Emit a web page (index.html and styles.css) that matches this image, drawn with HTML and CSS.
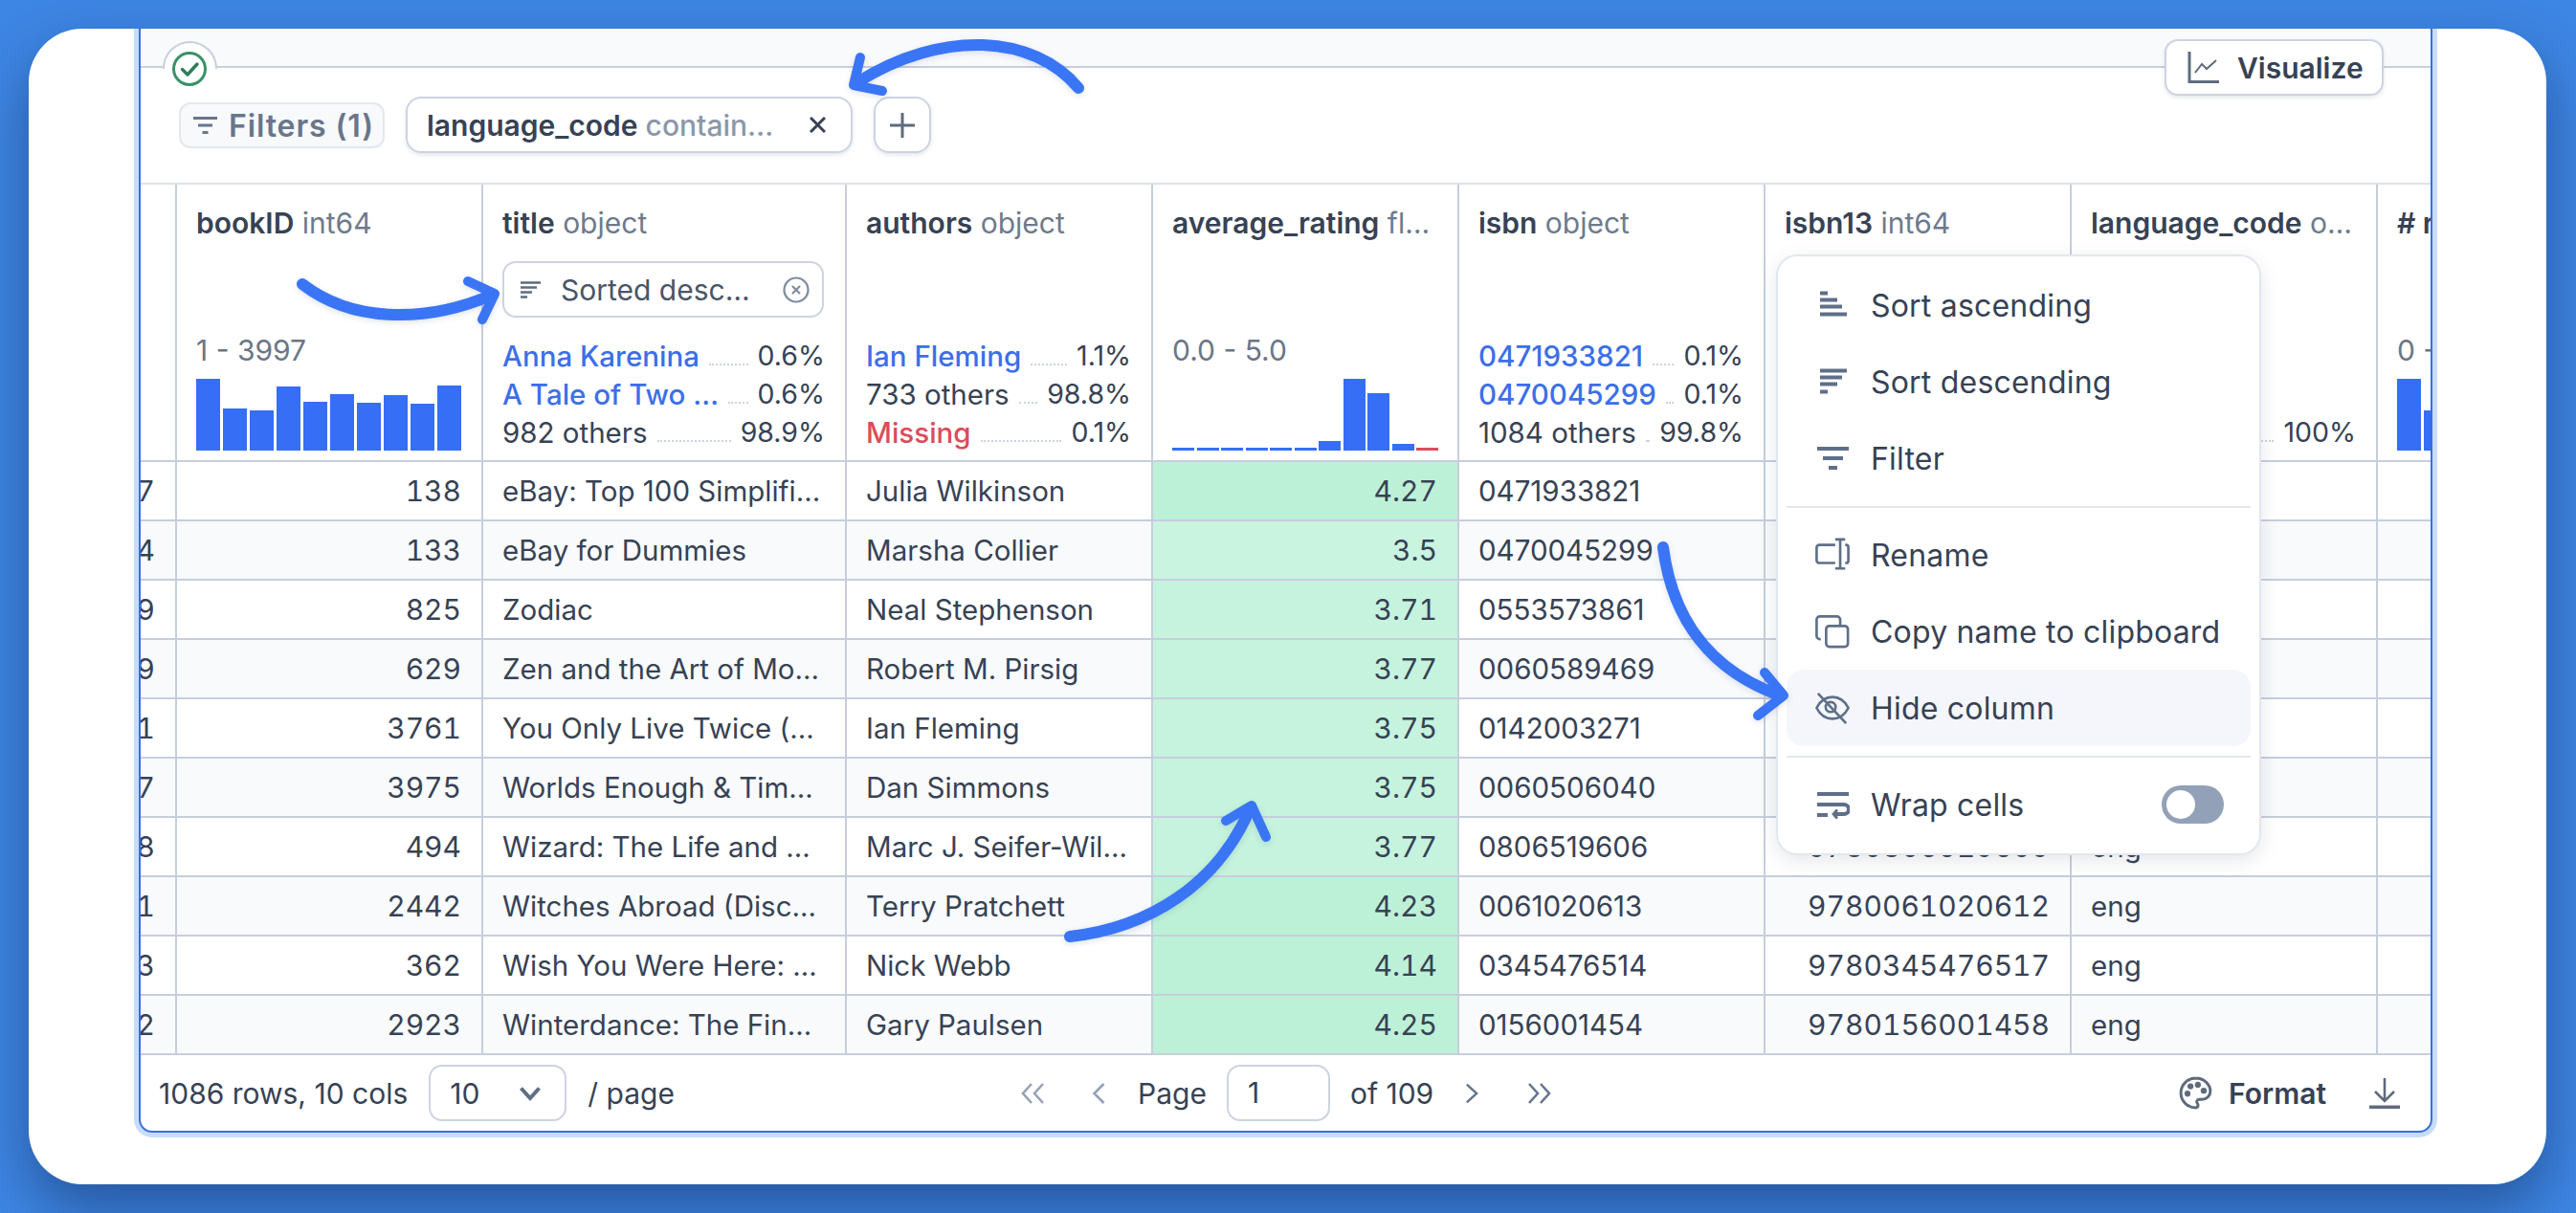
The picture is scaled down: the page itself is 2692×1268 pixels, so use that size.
FILE: index.html
```html
<!DOCTYPE html>
<html lang="en">
<head>
<meta charset="utf-8">
<title>Table</title>
<link rel="stylesheet" href="styles.css">
</head>
<body>
<main class="card">
  <section class="panel">
    <div class="strip"></div>
    <div class="tab"><svg class="tab-icon" viewBox="0 0 36 36"><circle cx="18" cy="18" r="16.5"/><path d="M10.5 18.5l5.5 5.5 10-11"/></svg></div>
    <button class="visualize"><svg class="vis-icon" viewBox="0 0 33 33"><path class="axis" d="M2 0V31.5H33"/><path d="M8 22l7-9 5 5 10-9"/></svg>Visualize</button>

    <div class="filters">
      <div class="filter-btn"><svg class="ico-filter" viewBox="0 0 25 18"><path d="M0 1.5H25M5 9H20M9.5 16.5H15.5"/></svg><span>Filters (1)</span></div>
      <div class="chip"><span class="chip-text"><b>language_code</b> contain…</span><svg class="chip-x" viewBox="0 0 17 17"><path d="M1 1L16 16M16 1L1 16"/></svg></div>
      <div class="plus"><svg viewBox="0 0 26 26"><path d="M13 0V26M0 13H26"/></svg></div>
    </div>

    <div class="scroll">
      <div class="table">
        <div class="row head">
          <div class="th"></div>
          <div class="th">
            <div class="name"><b>bookID</b> int64</div>
            <div class="summary">
              <div class="range">1 - 3997</div>
              <div class="bars"><i class="b75"></i><i class="b44"></i><i class="b42"></i><i class="b67"></i><i class="b51"></i><i class="b59"></i><i class="b50"></i><i class="b58"></i><i class="b49"></i><i class="b68"></i></div>
            </div>
          </div>
          <div class="th">
            <div class="name"><b>title</b> object</div>
            <div class="sorted">
              <svg class="ico-sort-s" viewBox="0 0 21 18"><path d="M0 1.5H21M0 6.5H17M0 11.5H12M0 16.5H7"/></svg>
              <span class="sorted-text">Sorted desc…</span>
              <svg class="ico-clear" viewBox="0 0 28 28"><circle cx="14" cy="14" r="12.5"/><path d="M10 10L18 18M18 10L10 18"/></svg>
            </div>
            <div class="stats">
              <div class="stat"><a>Anna Karenina</a><u></u><span>0.6%</span></div>
              <div class="stat"><a>A Tale of Two …</a><u></u><span>0.6%</span></div>
              <div class="stat"><em>982 others</em><u></u><span>98.9%</span></div>
            </div>
          </div>
          <div class="th">
            <div class="name"><b>authors</b> object</div>
            <div class="stats">
              <div class="stat"><a>Ian Fleming</a><u></u><span>1.1%</span></div>
              <div class="stat"><em>733 others</em><u></u><span>98.8%</span></div>
              <div class="stat"><a class="missing">Missing</a><u></u><span>0.1%</span></div>
            </div>
          </div>
          <div class="th">
            <div class="name"><b>average_rating</b> fl…</div>
            <div class="summary">
              <div class="range">0.0 - 5.0</div>
              <div class="bars tight"><i class="b3"></i><i class="b3"></i><i class="b3"></i><i class="b3"></i><i class="b3"></i><i class="b3"></i><i class="b10"></i><i class="b75"></i><i class="b60"></i><i class="b7"></i><i class="b3 red"></i></div>
            </div>
          </div>
          <div class="th">
            <div class="name"><b>isbn</b> object</div>
            <div class="stats">
              <div class="stat"><a>0471933821</a><u></u><span>0.1%</span></div>
              <div class="stat"><a>0470045299</a><u></u><span>0.1%</span></div>
              <div class="stat"><em>1084 others</em><u></u><span>99.8%</span></div>
            </div>
          </div>
          <div class="th">
            <div class="name"><b>isbn13</b> int64</div>
          </div>
          <div class="th">
            <div class="name"><b>language_code</b> o…</div>
            <div class="stats">
              <div class="stat"><em>eng</em><u></u><span>100%</span></div>
            </div>
          </div>
          <div class="th">
            <div class="name"><b># ratings</b> int64</div>
            <div class="summary">
              <div class="range">0 - 4500</div>
              <div class="bars"><i class="b75"></i><i class="b42"></i><i class="b42"></i></div>
            </div>
          </div>
        </div>

        <div class="row"><div class="num">7</div><div class="num">138</div><div>eBay: Top 100 Simplifi…</div><div>Julia Wilkinson</div><div class="num g1">4.27</div><div>0471933821</div><div class="num">9780471933823</div><div>eng</div><div></div></div>
        <div class="row alt"><div class="num">4</div><div class="num">133</div><div>eBay for Dummies</div><div>Marsha Collier</div><div class="num g3">3.5</div><div>0470045299</div><div class="num">9780470045299</div><div>eng</div><div></div></div>
        <div class="row"><div class="num">9</div><div class="num">825</div><div>Zodiac</div><div>Neal Stephenson</div><div class="num g2">3.71</div><div>0553573861</div><div class="num">9780553573862</div><div>eng</div><div></div></div>
        <div class="row alt"><div class="num">9</div><div class="num">629</div><div>Zen and the Art of Mo…</div><div>Robert M. Pirsig</div><div class="num g2">3.77</div><div>0060589469</div><div class="num">9780060589462</div><div>eng</div><div></div></div>
        <div class="row"><div class="num">1</div><div class="num">3761</div><div>You Only Live Twice (…</div><div>Ian Fleming</div><div class="num g2">3.75</div><div>0142003271</div><div class="num">9780142003275</div><div>eng</div><div></div></div>
        <div class="row alt"><div class="num">7</div><div class="num">3975</div><div>Worlds Enough &amp; Tim…</div><div>Dan Simmons</div><div class="num g2">3.75</div><div>0060506040</div><div class="num">9780060506049</div><div>eng</div><div></div></div>
        <div class="row"><div class="num">8</div><div class="num">494</div><div>Wizard: The Life and …</div><div>Marc J. Seifer-Wil…</div><div class="num g2">3.77</div><div>0806519606</div><div class="num">9780806519609</div><div>eng</div><div></div></div>
        <div class="row alt"><div class="num">1</div><div class="num">2442</div><div>Witches Abroad (Disc…</div><div>Terry Pratchett</div><div class="num g1">4.23</div><div>0061020613</div><div class="num">9780061020612</div><div>eng</div><div></div></div>
        <div class="row"><div class="num">3</div><div class="num">362</div><div>Wish You Were Here: …</div><div>Nick Webb</div><div class="num g1">4.14</div><div>0345476514</div><div class="num">9780345476517</div><div>eng</div><div></div></div>
        <div class="row alt"><div class="num">2</div><div class="num">2923</div><div>Winterdance: The Fin…</div><div>Gary Paulsen</div><div class="num g1">4.25</div><div>0156001454</div><div class="num">9780156001458</div><div>eng</div><div></div></div>
      </div>
    </div>

    <footer class="foot">
      <div class="foot-left">
        <span>1086 rows, 10 cols</span>
        <div class="select"><span>10</span><svg viewBox="0 0 24 16"><path d="M2.5 2.5L12 13L21.5 2.5"/></svg></div>
        <span>/ page</span>
      </div>
      <div class="foot-mid">
        <svg class="pg off dbl" viewBox="0 0 26 22"><path d="M12 1L3 11L12 21M24 1L15 11L24 21"/></svg>
        <svg class="pg off sgl back" viewBox="0 0 13 22"><path d="M12 1L2 11L12 21"/></svg>
        <span class="page-label">Page</span>
        <div class="page-input">1</div>
        <span>of 109</span>
        <svg class="pg sgl next" viewBox="0 0 15 22"><path d="M2 1L13 11L2 21"/></svg>
        <svg class="pg dbl last" viewBox="0 0 26 22"><path d="M2 1L11 11L2 21M14 1L23 11L14 21"/></svg>
      </div>
      <div class="foot-right">
        <svg class="palette" viewBox="0 0 24 24"><circle cx="13.5" cy="6.5" r="1.1"/><circle cx="17.5" cy="10.5" r="1.1"/><circle cx="8.5" cy="7.5" r="1.1"/><circle cx="6.5" cy="12.5" r="1.1"/><path d="M12 2C6.5 2 2 6.5 2 12s4.5 10 10 10c.926 0 1.648-.746 1.648-1.688 0-.437-.18-.835-.437-1.125-.29-.289-.438-.652-.438-1.125a1.64 1.64 0 0 1 1.668-1.668h1.996c3.051 0 5.555-2.503 5.555-5.554C21.965 6.012 17.461 2 11.994 2z"/></svg>
        <span class="format">Format</span>
        <svg class="download" viewBox="0 0 32 32"><path d="M16 0V23M6 14L16 24L26 14"/><path class="thick" d="M0 30.5H32"/></svg>
      </div>
    </footer>

    <nav class="menu">
      <div class="item"><svg class="mi" viewBox="0 0 36 36"><path d="M5 6H13M5 13H23M5 20H28M5 28H33" transform="translate(0 -.5)"/></svg>Sort ascending</div>
      <div class="item"><svg class="mi" viewBox="0 0 36 36"><path d="M5 7H33M5 14H28M5 21H23M5 29H13" transform="translate(0 -.5)"/></svg>Sort descending</div>
      <div class="item"><svg class="mi" viewBox="0 0 36 36"><path d="M2 8H35M8 18H29M14 28H23"/></svg>Filter</div>
      <hr class="sep">
      <div class="item"><svg class="mi thin" viewBox="0 0 38 38"><path d="M22 8H4.5A3 3 0 0 0 1.5 11V25A3 3 0 0 0 4.5 28H22M33 8H34A2.5 2.5 0 0 1 36.500 10.500V25.500A2.500 2.500 0 0 1 34 28H33M27.500 2V34M22 2H33M22 34H33"/></svg>Rename</div>
      <div class="item"><svg class="mi thin" viewBox="0 0 38 38"><rect x="12" y="13" width="24" height="23" rx="3.500"/><path d="M6 27.500H5A3.500 3.500 0 0 1 1.500 24V6A3.500 3.500 0 0 1 5 2.500H24A3.500 3.500 0 0 1 27.500 6V13"/></svg>Copy name to clipboard</div>
      <div class="item hover"><svg class="mi thin" viewBox="0 0 38 38"><path d="M1.500 19C6 10 12 7 19 7S32 10 36.500 19C32 28 26 31 19 31S6 28 1.500 19Z"/><circle cx="17" cy="18" r="5.500"/><path d="M3 3L34 36"/></svg>Hide column</div>
      <hr class="sep">
      <div class="item wrap"><svg class="mi" viewBox="0 0 36 36"><path d="M2 7H35M2 18H30A4.500 4.500 0 0 1 30 28H19M2 29H13"/><path class="hook" d="M23 23.500L19 28L23 32.500"/></svg>Wrap cells<span class="toggle"><span class="knob"></span></span></div>
    </nav>
  </section>

  <svg class="arrows" viewBox="30 30 2632 1208">
    <path d="M1127 92C1080 36 985 30 896 86"/><path class="head" d="M899 60L892 89L922 95"/>
    <path d="M316 297C365 335 440 340 515 308"/><path class="head" d="M489 294L517 307L504 334"/>
    <path d="M1738 572C1748 650 1790 702 1860 727"/><path class="head" d="M1844 703L1864 727L1837 748"/>
    <path d="M1118 979C1200 970 1272 925 1306 846"/><path class="head" d="M1281 858L1308 842L1323 875"/>
  </svg>
</main>
</body>
</html>
```
FILE: styles.css
```css
* { box-sizing: border-box; }
html, body { margin: 0; height: 1268px; overflow: hidden; }
body {
  background: #3e86e4;
  padding: 30px 31px 30px 30px;
  font-family: Inter, "Noto Sans", sans-serif;
  font-size: 30px;
  color: #374254;
}
svg { fill: none; stroke: currentColor; display: block; flex: none; }

.card {
  position: relative;
  height: 1208px;
  background: #fff;
  border-radius: 56px;
  box-shadow: 0 26px 60px rgba(8, 22, 60, .42);
  padding: 0 119px 0 115px;
  overflow: hidden;
}
.panel {
  position: relative;
  height: 1154px;
  border: 2px solid #3a6fdc;
  border-top: 0;
  border-radius: 0 0 14px 14px;
  box-shadow: 0 0 0 5px #c6ddfa;
  background: #fff;
}

/* top strip */
.strip {
  height: 41px;
  background: #f9fafc;
  border-bottom: 2px solid #c8cfdc;
}
.tab {
  position: absolute;
  left: 23px;
  top: 13px;
  width: 57px;
  height: 50px;
  background: #fff;
  border: 2px solid #c8cfdc;
  border-bottom: 0;
  border-radius: 30px 30px 0 0;
}
.tab::after {
  content: "";
  position: absolute;
  left: -2px;
  right: -2px;
  top: 27px;
  height: 24px;
  background: #fff;
}
.tab-icon {
  position: absolute;
  z-index: 1;
  left: 8px;
  top: 9px;
  width: 36px;
  height: 36px;
  color: #3a9168;
  stroke-width: 3;
}
.tab-icon path { stroke-linecap: round; stroke-linejoin: round; stroke-width: 3.4; color: #2f7d5b; }
.visualize {
  position: absolute;
  left: 2115px;
  top: 11px;
  width: 229px;
  height: 59px;
  display: flex;
  align-items: center;
  gap: 19px;
  padding: 0 0 0 22px;
  font: 600 30px Inter, sans-serif;
  color: #374254;
  background: #fff;
  border: 2px solid #cdd3e0;
  border-radius: 14px;
  box-shadow: 0 2px 4px rgba(100, 116, 139, .18);
}
.vis-icon { width: 33px; height: 33px; color: #5f6b7d; stroke-width: 2; }
.vis-icon .axis { stroke-width: 3; }

/* filter row */
.filters {
  height: 120px;
  padding: 30px 0 0 40px;
  display: flex;
  align-items: flex-start;
  gap: 22px;
}
.filter-btn {
  margin-top: 6px;
  width: 215px;
  height: 48px;
  display: flex;
  align-items: center;
  gap: 12px;
  padding-left: 13px;
  background: #f7f9fb;
  border: 2px solid #e3e7ee;
  border-radius: 12px;
  color: #69768a;
  font-weight: 600;
  font-size: 32px;
  letter-spacing: .9px;
  white-space: nowrap;
}
.ico-filter { width: 25px; height: 18px; stroke-width: 3; }
.chip {
  width: 467px;
  height: 59px;
  display: flex;
  align-items: center;
  justify-content: space-between;
  padding: 0 26px 0 20px;
  border: 2px solid #cdd3e0;
  border-radius: 16px;
  box-shadow: 0 2px 4px rgba(100, 116, 139, .18);
}
.chip-text { color: #8b97a9; font-weight: 500; white-space: nowrap; }
.chip-text b { color: #374254; font-weight: 600; }
.chip-x { width: 17px; height: 17px; stroke-width: 3; color: #374254; }
.plus {
  width: 60px;
  height: 59px;
  display: flex;
  align-items: center;
  justify-content: center;
  border: 2px solid #cdd3e0;
  border-radius: 16px;
  box-shadow: 0 2px 4px rgba(100, 116, 139, .18);
  color: #5f6b7d;
}
.plus svg { width: 26px; height: 26px; stroke-width: 3; }

/* table */
.scroll { overflow: hidden; border-top: 2px solid #dde1ea; }
.table { margin-left: -282px; width: 2940px; font-size: 29.500px; }
.row {
  display: grid;
  grid-template-columns: 320px 320px 380px repeat(6, 320px);
  height: 62px;
  border-bottom: 2px solid #c6cedd;
  background: #fff;
}
.row.alt { background: #f8fafc; }
.row > div {
  display: flex;
  align-items: center;
  padding: 0 21px 0 20px;
  border-right: 2px solid #c6cedd;
  white-space: nowrap;
  overflow: hidden;
}
.row > .num { justify-content: flex-end; font-variant-numeric: tabular-nums; font-size: 30px; }
.row > .g1 { background: #bdf1d7; }
.row > .g2 { background: #c5f3dd; }
.row > .g3 { background: #c9f4e0; }

.row.head { height: 290px; }
.row.head > .th {
  display: flex;
  flex-direction: column;
  align-items: stretch;
  padding-top: 20px;
  padding-bottom: 9px;
  position: relative;
}
.name { height: 40px; line-height: 40px; color: #6e7a8c; font-size: 30px; }
.name b { color: #374254; font-weight: 600; }
.summary { margin-top: auto; }
.range { height: 40px; line-height: 40px; color: #6b7687; margin-bottom: 10px; font-size: 30px; }
.bars { display: flex; height: 75px; align-items: flex-end; gap: 3px; margin-bottom: 1px; }
.bars i { flex: 0 0 25px; background: #366ef6; }
.bars.tight i { flex: 0 0 23px; }
.bars.tight { gap: 2.500px; }
.bars i.red { background: #dc4c5c; }
.b3 { height: 3px; } .b7 { height: 7px; } .b10 { height: 10px; }
.b42 { height: 42px; } .b44 { height: 44px; } .b49 { height: 49px; }
.b50 { height: 50px; } .b51 { height: 51px; } .b58 { height: 58px; }
.b59 { height: 59px; } .b60 { height: 60px; } .b67 { height: 67px; }
.b68 { height: 68px; } .b75 { height: 75px; }

.stats { margin-top: auto; }
.stat { display: flex; height: 40px; line-height: 40px; white-space: nowrap; }
.stat span { font-size: 28.500px; }
.stat a { color: #3c6fe8; font-weight: 500; }
.stat a.missing { color: #dc4c5c; }
.stat em { font-style: normal; }
.stat u {
  flex: 1;
  min-width: 2px;
  text-decoration: none;
  margin: 0 10px 10px;
  align-self: flex-end;
  border-bottom: 2px dotted #ccd3de;
}
.sorted {
  margin-top: 20px;
  width: 336px;
  height: 59px;
  display: flex;
  align-items: center;
  padding: 0 13px 0 17px;
  border: 2px solid #cdd3e0;
  border-radius: 14px;
  color: #4a5568;
  font-size: 30px;
}
.ico-sort-s { width: 21px; height: 18px; stroke-width: 2.600; color: #5f6b7d; }
.sorted-text { margin-left: 21px; flex: 1; }
.ico-clear { width: 28px; height: 28px; stroke-width: 2.200; color: #7f8b9e; }

/* footer */
.foot {
  height: 79px;
  display: grid;
  grid-template-columns: 900px 1fr auto;
  align-items: center;
  padding: 0 32px 0 19px;
}
.foot-left, .foot-mid, .foot-right { display: flex; align-items: center; }
.foot-left { gap: 22px; }
.select {
  width: 144px;
  height: 59px;
  display: flex;
  align-items: center;
  justify-content: space-between;
  padding: 0 24px 0 20px;
  border: 2px solid #cdd3e0;
  border-radius: 14px;
}
.select svg { width: 24px; height: 16px; stroke-width: 4; color: #5f6f84; }
.foot-mid { gap: 21px; }
.pg { height: 22px; stroke-width: 2.600; color: #66758c; }
.pg.dbl { width: 26px; }
.pg.sgl { width: 14px; }
.pg.off { color: #95a2b5; }
.pg.back { margin-left: 28px; }
.page-label { margin-left: 13px; }
.pg.next { margin-left: 12px; }
.pg.last { margin-left: 30px; }
.page-input {
  width: 108px;
  height: 59px;
  line-height: 55px;
  padding-left: 20px;
  border: 2px solid #cdd3e0;
  border-radius: 14px;
}
.palette { width: 37px; height: 37px; stroke-width: 1.900; color: #5f6b7d; }
.palette circle { fill: currentColor; }
.format { font-weight: 600; margin: 0 45px 0 16px; }
.download { width: 32px; height: 32px; stroke-width: 2.600; color: #5f6b7d; }
.download .thick { stroke-width: 4; }

/* menu */
.menu {
  position: absolute;
  left: 1709px;
  top: 236px;
  width: 507px;
  height: 628px;
  padding: 11px 9px;
  background: #fff;
  border: 2px solid #e3e7ef;
  border-radius: 22px;
  box-shadow: 0 6px 20px rgba(71, 85, 105, .14);
  font-size: 32px;
  letter-spacing: .2px;
}
.item {
  height: 80px;
  display: flex;
  align-items: center;
  gap: 22px;
  padding-left: 30px;
  border-radius: 18px;
}
.item.hover { background: #f4f6fb; }
.mi { width: 36px; height: 36px; stroke-width: 4; color: #5f6f88; }
.mi.thin { stroke-width: 2.800; }
.wrap .hook { stroke-width: 2.800; }
.sep { margin: 9.500px 0; border: 0; border-top: 2px solid #e3e7ef; }
.wrap { position: relative; }
.toggle {
  position: absolute;
  right: 28px;
  top: 20px;
  width: 65px;
  height: 40px;
  padding: 5px;
  border-radius: 20px;
  background: #93a1b8;
}
.knob { display: block; width: 30px; height: 30px; border-radius: 50%; background: #fff; }

/* annotation arrows */
.arrows {
  position: absolute;
  left: 0;
  top: 0;
  width: 2632px;
  height: 1208px;
  color: #3a75f5;
  stroke-width: 12;
  stroke-linecap: round;
  stroke-linejoin: round;
  pointer-events: none;
  filter: drop-shadow(0 2px 3px rgba(30, 60, 120, .15));
}
.arrows .head { stroke-width: 10; }
```
